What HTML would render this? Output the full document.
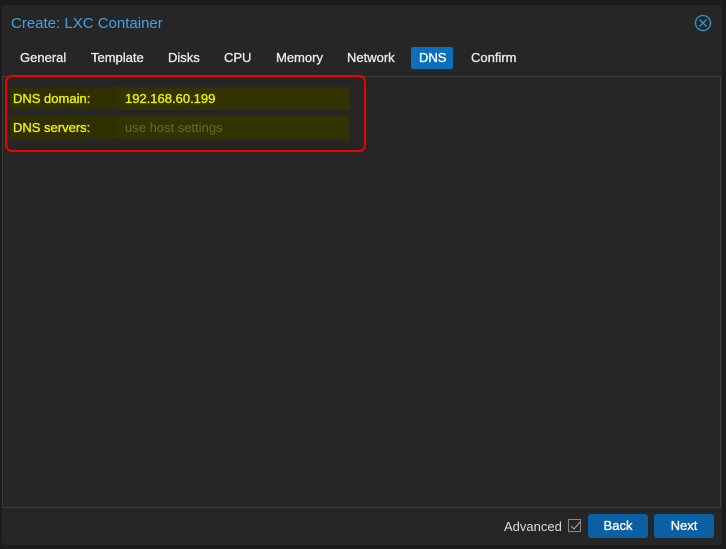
<!DOCTYPE html><html><head><style>
body{margin:0;width:726px;height:549px;background:#1c1c1c;font-family:"Liberation Sans",sans-serif;position:relative;overflow:hidden}
.win{position:absolute;left:2px;top:5px;width:720px;height:540px;background:#262626;border-radius:3px}
.title{position:absolute;left:9px;top:10px;font-size:15px;color:#3fa3e4}
.b{-webkit-text-stroke:0.35px currentColor}
.tab{position:absolute;top:42px;height:22px;line-height:22px;font-size:13px;color:#e8e8e8;padding:0 8px;text-align:center;-webkit-text-stroke:0.35px currentColor}
.tab.act{background:#0a6fbd;color:#fff;border-radius:2px}
.body{position:absolute;left:0;top:71px;width:717px;height:430px;border:1px solid #3c3c3c}
.red{position:absolute;left:3px;top:70px;width:357px;height:73px;border:2px solid #e00;border-radius:7px}
.row{position:absolute;left:8px;width:340px;height:23px;background:#2f2f00}
.lab{position:absolute;left:3px;top:4px;font-size:13px;color:#f0f000;-webkit-text-stroke:0.35px currentColor}
.inp{position:absolute;left:108px;top:0;width:232px;height:23px;background:#333300}
.inp span{position:absolute;left:7px;top:4px;font-size:13px}
.btn{position:absolute;top:509px;width:60px;height:24px;background:#0a60a3;color:#fff;font-size:13px;line-height:24px;text-align:center;border-radius:3px;-webkit-text-stroke:0.35px currentColor}
</style></head><body>
<div class="win">
<div class="title">Create: LXC Container</div>
<svg style="position:absolute;left:692px;top:9px" width="18" height="18" viewBox="0 0 18 18"><circle cx="9" cy="9" r="7.5" fill="none" stroke="#2a9ad6" stroke-width="1.3"/><path d="M5.5 5.5L12.5 12.5M12.5 5.5L5.5 12.5" stroke="#2a9ad6" stroke-width="1.3"/></svg>
<div class="tab" style="left:10px">General</div>
<div class="tab" style="left:81px">Template</div>
<div class="tab" style="left:158px">Disks</div>
<div class="tab" style="left:214px">CPU</div>
<div class="tab" style="left:266px">Memory</div>
<div class="tab" style="left:337px">Network</div>
<div class="tab act" style="left:409px;width:26px">DNS</div>
<div class="tab" style="left:461px">Confirm</div>
<div class="body"></div>
<div class="red"></div>
<div class="row" style="top:82px"><div class="lab">DNS domain:</div><div class="inp"><span class="b" style="color:#f0f000">192.168.60.199</span></div></div>
<div class="row" style="top:111px"><div class="lab">DNS servers:</div><div class="inp"><span style="color:#6b6b1a">use host settings</span></div></div>
<div style="position:absolute;left:502px;top:514px;font-size:13px;color:#ddd">Advanced</div>
<div style="position:absolute;left:566px;top:514px;width:11px;height:11px;border:1px solid #888"></div>
<svg style="position:absolute;left:567px;top:515px" width="12" height="12"><path d="M2 6L5 9L11 2" fill="none" stroke="#aaa" stroke-width="1"/></svg>
<div class="btn" style="left:586px">Back</div>
<div class="btn" style="left:652px">Next</div>
</div>
</body></html>
